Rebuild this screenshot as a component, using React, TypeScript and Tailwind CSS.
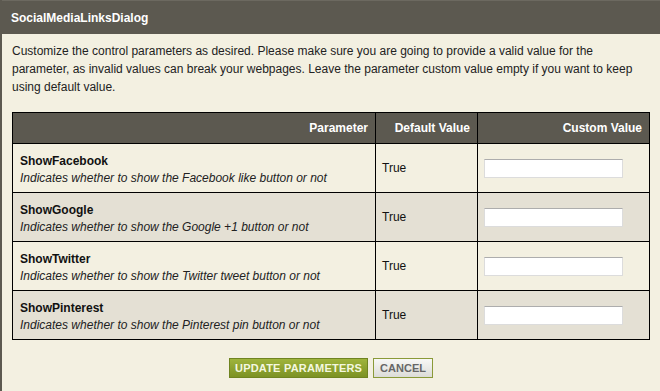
import React from 'react';

const params = [
  { name: 'ShowFacebook', desc: 'Indicates whether to show the Facebook like button or not', def: 'True' },
  { name: 'ShowGoogle', desc: 'Indicates whether to show the Google +1 button or not', def: 'True' },
  { name: 'ShowTwitter', desc: 'Indicates whether to show the Twitter tweet button or not', def: 'True' },
  { name: 'ShowPinterest', desc: 'Indicates whether to show the Pinterest pin button or not', def: 'True' },
];

export default function App() {
  return (
    <div className="w-[660px] h-[391px] bg-[#f3f0e1] border-l-2 border-[#5c5950] text-[#111] font-['Liberation_Sans',Arial,sans-serif] overflow-hidden">
      {/* Title bar */}
      <div className="h-[34px] bg-[#5c5950] border-t border-[#6c6960] flex items-center pl-[9px] text-white font-bold text-[12px]">
        SocialMediaLinksDialog
      </div>

      {/* Intro */}
      <p className="pl-[10px] pr-[20px] pt-[8px] text-[12px] leading-[18px] text-[#222]">
        Customize the control parameters as desired. Please make sure you are going to provide a valid value for the parameter, as invalid values can break your webpages. Leave the parameter custom value empty if you want to keep using default value.
      </p>

      {/* Table */}
      <table className="ml-[10px] mt-[16px] w-[638px] border-collapse border border-black text-[12px]">
        <thead>
          <tr className="bg-[#5c5950] text-white font-bold h-[31px]">
            <th className="w-[363px] border border-black text-right pr-[7px] font-bold">Parameter</th>
            <th className="w-[102px] border border-black text-right pr-[7px] font-bold">Default Value</th>
            <th className="border border-black text-right pr-[7px] font-bold">Custom Value</th>
          </tr>
        </thead>
        <tbody>
          {params.map((p, i) => (
            <tr key={p.name} className={`h-[49px] ${i % 2 === 0 ? 'bg-[#f3f0e1]' : 'bg-[#e4e0d4]'}`}>
              <td className="border border-black pl-[7px] pt-[3px] align-middle">
                <div className="font-bold leading-[17px]">{p.name}</div>
                <div className="italic leading-[17px] text-[#222]">{p.desc}</div>
              </td>
              <td className="border border-black pl-[6px] align-middle">{p.def}</td>
              <td className="border border-black pl-[6px] align-middle">
                <input
                  type="text"
                  className="block w-[139px] h-[19px] bg-white border border-[#dcdcdc] border-t-[#adadad] outline-none"
                />
              </td>
            </tr>
          ))}
        </tbody>
      </table>

      {/* Buttons */}
      <div className="flex justify-center gap-[5px] mt-[18px]">
        <button className="h-[20px] px-[5px] border border-[#6f8420] bg-gradient-to-b from-[#9fb43c] to-[#7c9224] text-[#f4f8e0] font-bold text-[11px] tracking-[0.2px]">
          UPDATE PARAMETERS
        </button>
        <button className="h-[20px] px-[6px] border border-[#8a9a38] bg-gradient-to-b from-[#f8f8f6] to-[#dcdcd8] text-[#666] font-bold text-[11px]">
          CANCEL
        </button>
      </div>
    </div>
  );
}
